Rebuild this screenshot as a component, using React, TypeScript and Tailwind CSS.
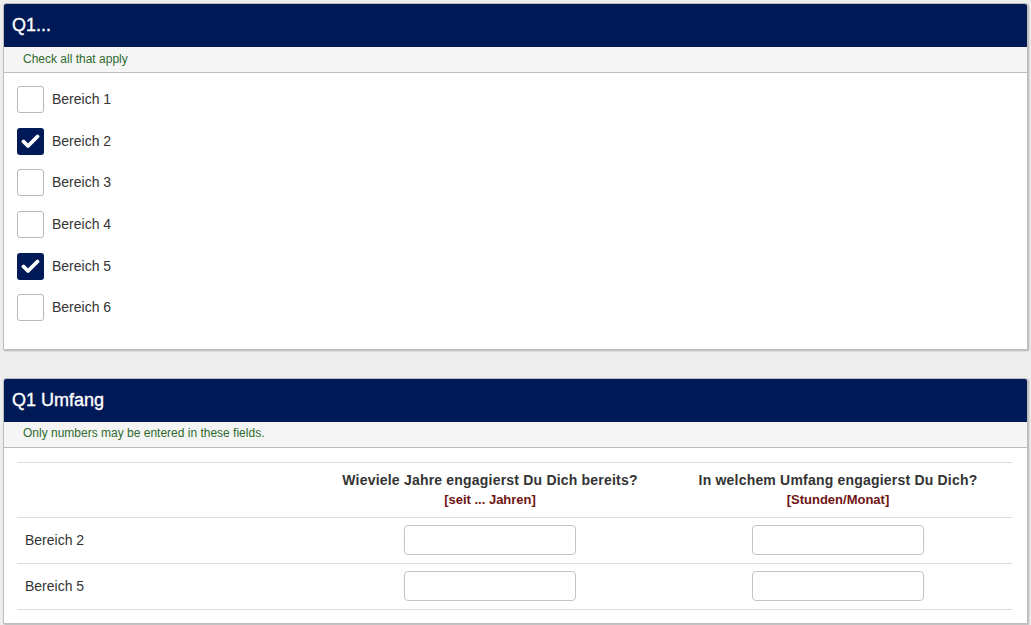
import React from "react";

const items = [
  { label: "Bereich 1", checked: false },
  { label: "Bereich 2", checked: true },
  { label: "Bereich 3", checked: false },
  { label: "Bereich 4", checked: false },
  { label: "Bereich 5", checked: true },
  { label: "Bereich 6", checked: false },
];

function Check({ checked }: { checked: boolean }) {
  if (checked) {
    return (
      <div className="w-[27px] h-[27px] rounded-[3px] bg-[#001a57] flex items-center justify-center shrink-0">
        <svg width="19" height="16" viewBox="0 0 19 16">
          <path d="M2.5 8.5 L7 13 L16.5 3.5" fill="none" stroke="#ffffff" strokeWidth="3.8" strokeLinecap="round" strokeLinejoin="round" />
        </svg>
      </div>
    );
  }
  return <div className="w-[27px] h-[27px] rounded-[3px] bg-white border border-[#b8b8b8] shrink-0" />;
}

function Panel({ title, help, children }: { title: string; help: string; children: React.ReactNode }) {
  return (
    <div className="bg-white border border-[#bcbcbc] rounded-t-[3px] shadow-[1px_1px_2px_rgba(0,0,0,0.25)]">
      <div className="h-[43px] bg-[#001a57] rounded-t-[2px] flex items-center px-[8px] text-white text-[18px] [-webkit-text-stroke:0.35px_white]">
        {title}
      </div>
      <div className="h-[26px] bg-[#f5f5f5] border-b border-[#bcbcbc] flex items-center pl-[19px] pb-[2px] text-[12px] text-[#2f6b2f]">
        {help}
      </div>
      {children}
    </div>
  );
}

export default function App() {
  return (
    <div className="min-h-[625px] bg-[#eeeeee] pt-[3px] pl-[3px] pr-[3px] text-[#333333]" style={{ fontFamily: '"Liberation Sans", Arial, sans-serif' }}>
      <div className="w-[1025px]">
        <Panel title="Q1..." help="Check all that apply">
          <div className="pt-[6px] pb-[20px] pl-[13px]">
            {items.map((it) => (
              <div key={it.label} className="h-[41.6px] flex items-center gap-[8px]">
                <Check checked={it.checked} />
                <span className="text-[14px] text-[#333333]">{it.label}</span>
              </div>
            ))}
          </div>
        </Panel>
        <div className="h-[28px]" />
        <Panel title="Q1 Umfang" help="Only numbers may be entered in these fields.">
          <div className="pt-[14px] pb-[13px] pl-[13px] pr-[15px]">
            <table className="w-[995px] border-collapse table-fixed">
              <colgroup>
                <col className="w-[299px]" />
                <col className="w-[348px]" />
                <col className="w-[348px]" />
              </colgroup>
              <thead>
                <tr className="border-t border-b border-[#dddddd] h-[55px]">
                  <th></th>
                  <th className="text-center align-middle pt-[1px]">
                    <div className="text-[14px] font-bold text-[#333333] leading-[20px] tracking-[0.2px]">Wieviele Jahre engagierst Du Dich bereits?</div>
                    <div className="text-[13px] font-bold text-[#6e1414] leading-[20px]">[seit ... Jahren]</div>
                  </th>
                  <th className="text-center align-middle pt-[1px]">
                    <div className="text-[14px] font-bold text-[#333333] leading-[20px] tracking-[0.2px]">In welchem Umfang engagierst Du Dich?</div>
                    <div className="text-[13px] font-bold text-[#6e1414] leading-[20px]">[Stunden/Monat]</div>
                  </th>
                </tr>
              </thead>
              <tbody>
                {["Bereich 2", "Bereich 5"].map((r) => (
                  <tr key={r} className="border-b border-[#dddddd] h-[46px]">
                    <td className="pl-[8px] text-[14px] text-[#333333] align-middle">{r}</td>
                    <td className="align-middle">
                      <div className="flex justify-center">
                        <input type="text" className="w-[172px] h-[30px] border border-[#c4c4c4] rounded-[4px] bg-white outline-none" />
                      </div>
                    </td>
                    <td className="align-middle">
                      <div className="flex justify-center">
                        <input type="text" className="w-[172px] h-[30px] border border-[#c4c4c4] rounded-[4px] bg-white outline-none" />
                      </div>
                    </td>
                  </tr>
                ))}
              </tbody>
            </table>
          </div>
        </Panel>
      </div>
    </div>
  );
}
